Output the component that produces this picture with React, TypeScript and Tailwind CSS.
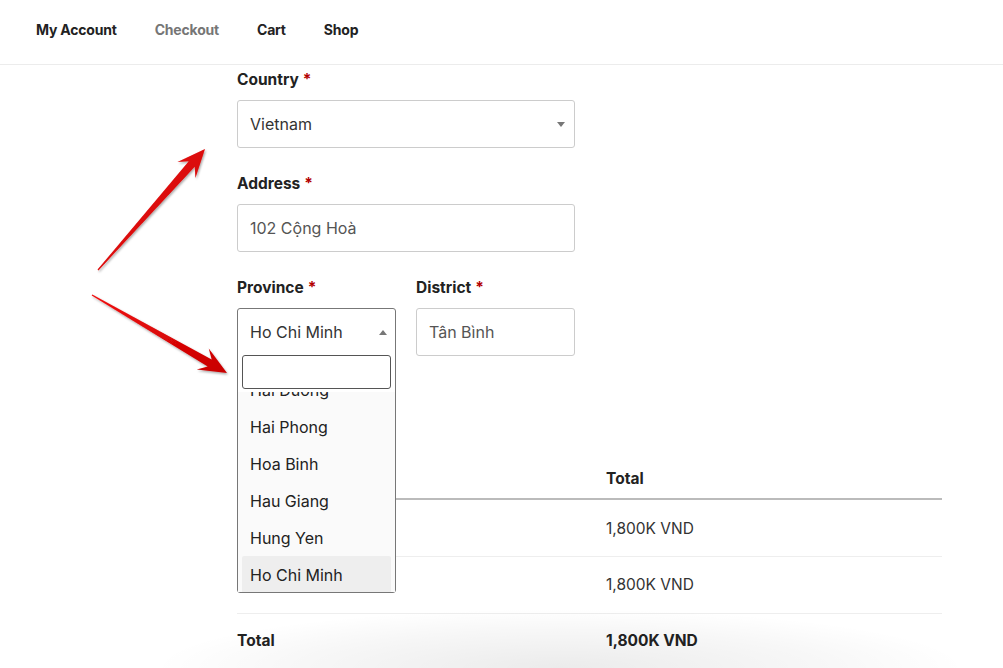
import React from "react";

const font = { fontFamily: "Inter, 'Liberation Sans', sans-serif" };

const Req = () => <span className="text-[#b30000] ml-1">*</span>;

const Label = ({ children }: { children: React.ReactNode }) => (
  <div className="h-6 leading-6 text-[15.5px] font-bold text-[#222] mb-[9px] pt-[1px]">
    {children}
    <Req />
  </div>
);

const Caret = ({ up }: { up?: boolean }) => (
  <svg width="8" height="5" viewBox="0 0 8 5">
    <path d={up ? "M0 5 L4 0 L8 5 Z" : "M0 0 L8 0 L4 5 Z"} fill="#777" />
  </svg>
);

type Pt = [number, number];

const Arrow = ({ tail, tip }: { tail: Pt; tip: Pt }) => {
  const dx = tip[0] - tail[0];
  const dy = tip[1] - tail[1];
  const L = Math.hypot(dx, dy);
  const ux = dx / L;
  const uy = dy / L;
  const nx = -uy;
  const ny = ux;
  const p = (t: number, w: number) =>
    `${tail[0] + ux * t + nx * w},${tail[1] + uy * t + ny * w}`;
  const pts = [
    p(0, 0.6),
    p(L - 20, 4),
    p(L - 28, 12),
    p(L, 0),
    p(L - 28, -12),
    p(L - 20, -4),
    p(0, -0.6),
  ].join(" ");
  return <polygon points={pts} fill="url(#arrowRed)" filter="url(#arrowShadow)" />;
};

const provinces = ["Hai Duong", "Hai Phong", "Hoa Binh", "Hau Giang", "Hung Yen", "Ho Chi Minh"];

export default function App() {
  return (
    <div className="relative w-[1003px] h-[668px] overflow-hidden bg-white text-[#333]" style={font}>
      <header className="h-[65px] border-b border-[#ececec] flex items-center pb-[6px] pl-9 gap-[38px] text-[14px] font-bold">
        <span className="text-[#222] tracking-[-0.2px]">My Account</span>
        <span className="text-[#767676] tracking-[-0.2px]">Checkout</span>
        <span className="text-[#222] tracking-[-0.2px]">Cart</span>
        <span className="text-[#222] tracking-[-0.2px]">Shop</span>
      </header>

      <main className="ml-[237px] w-[705px] pt-[2px]">
        <div className="w-[338px]">
          <Label>Country</Label>
          <div className="h-12 border border-[#ccc] rounded-[3px] flex items-center justify-between pl-3 pr-[9px] text-base text-[#333]">
            <span>Vietnam</span>
            <Caret />
          </div>

          <div className="mt-[23px]">
            <Label>Address</Label>
            <div className="h-12 border border-[#ccc] rounded-[3px] flex items-center pl-3 text-base text-[#555]">
              102 Cộng Hoà
            </div>
          </div>

          <div className="mt-[23px] flex gap-[21px]">
            <div className="w-[158px]">
              <Label>Province</Label>
              <div className="relative h-12">
                <div className="absolute left-0 top-0 w-[159px] z-10 border border-[#777] rounded-[3px] bg-white">
                  <div className="h-[46px] flex items-center justify-between pl-3 pr-[8px] text-base text-[#333]">
                    <span>Ho Chi Minh</span>
                    <Caret up />
                  </div>
                  <div className="px-1 pb-[3px] relative z-10">
                    <div className="h-[34px] border border-[#555] rounded-[3px] bg-white" />
                  </div>
                  <div className="h-[200px] overflow-hidden bg-[#fafafa] px-1">
                    <div className="-mt-[21px]">
                      {provinces.map((p) => (
                        <div
                          key={p}
                          className={`h-[37px] flex items-center pl-2 text-base text-[#222] ${
                            p === "Ho Chi Minh" ? "bg-[#eeeeee] rounded-[2px]" : ""
                          }`}
                        >
                          {p}
                        </div>
                      ))}
                    </div>
                  </div>
                </div>
              </div>
            </div>
            <div className="w-[159px]">
              <Label>District</Label>
              <div className="h-12 border border-[#ccc] rounded-[3px] flex items-center pl-3 text-base text-[#555]">
                Tân Bình
              </div>
            </div>
          </div>
        </div>

        <table className="mt-[101px] w-[705px] border-collapse text-[15.5px]">
          <thead>
            <tr className="h-[42px] border-b-2 border-[#bbb] text-left">
              <th className="w-[369px]" />
              <th className="font-bold text-[#222] pt-[2px]">Total</th>
            </tr>
          </thead>
          <tbody>
            <tr className="h-[57px] border-b border-[#eee]">
              <td />
              <td className="pt-[1px]">1,800K VND</td>
            </tr>
            <tr className="h-[57px] border-b border-[#eee]">
              <td />
              <td className="pt-[1px]">1,800K VND</td>
            </tr>
            <tr className="h-[55px]">
              <td className="font-bold text-[#222]">Total</td>
              <td className="font-bold text-[#222]">1,800K VND</td>
            </tr>
          </tbody>
        </table>
      </main>

      <div className="pointer-events-none absolute bottom-0 left-[150px] w-[820px] h-[60px] bg-[radial-gradient(ellipse_at_bottom,rgba(0,0,0,0.08),rgba(0,0,0,0.03)_45%,transparent_70%)]" />

      <svg className="pointer-events-none absolute left-0 top-0" width="1003" height="668">
        <defs>
          <linearGradient id="arrowRed" x1="0" y1="0" x2="1" y2="1">
            <stop offset="0" stopColor="#f01010" />
            <stop offset="1" stopColor="#c80000" />
          </linearGradient>
          <filter id="arrowShadow" x="-20%" y="-20%" width="140%" height="140%">
            <feDropShadow dx="1" dy="1.5" stdDeviation="1" floodColor="#000" floodOpacity="0.35" />
          </filter>
        </defs>
        <Arrow tail={[98, 270]} tip={[205, 149]} />
        <Arrow tail={[92, 295]} tip={[227, 373]} />
      </svg>
    </div>
  );
}
